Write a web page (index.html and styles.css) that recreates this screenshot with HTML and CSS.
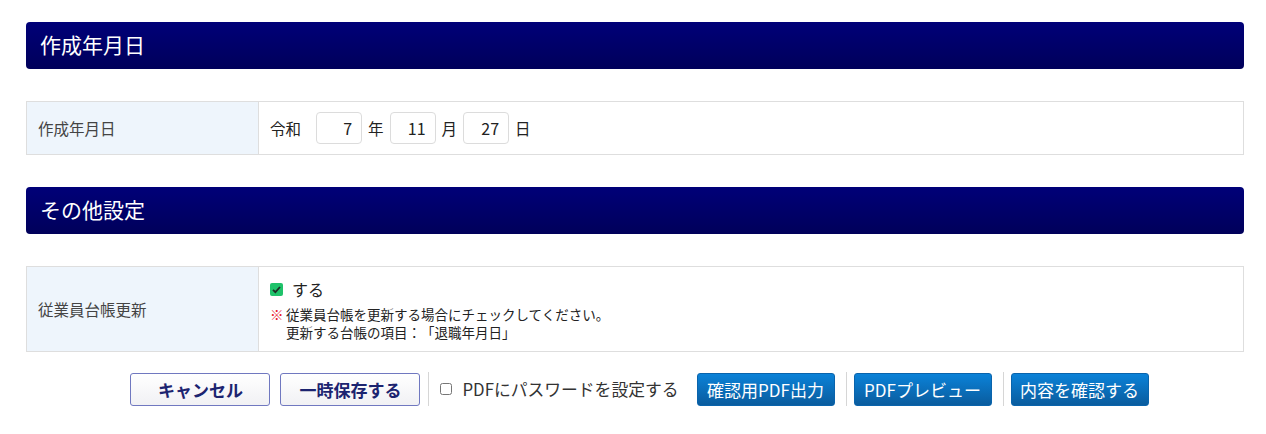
FILE: index.html
```html
<!DOCTYPE html>
<html>
  <head>
    <title>作成年月日</title>
    <link rel="stylesheet" href="styles.css">
  </head>
  <body>
    <div class="page">
      <h2 class="section_head">作成年月日</h2>
      <table class="form_table">
        <tr>
          <th>作成年月日</th>
          <td>
            <div class="date_row">
              <span class="era">令和</span>
              <input class="date_box" type="text" value="7"/>
              <span>年</span>
              <input class="date_box" type="text" value="11"/>
              <span>月</span>
              <input class="date_box" type="text" value="27"/>
              <span>日</span>
            </div>
          </td>
        </tr>
      </table>

      <h2 class="section_head">その他設定</h2>
      <table class="form_table tall">
        <tr>
          <th>従業員台帳更新</th>
          <td>
            <label class="check_line">
              <span class="green_check">
                <svg width="13" height="13" viewBox="0 0 13 13"><path d="M3 6.8 L5.4 9.2 L10 4" fill="none" stroke="#1d2b24" stroke-width="1.8"/></svg>
              </span>
              する
            </label>
            <p class="note"><span class="mark">※</span>従業員台帳を更新する場合にチェックしてください。<br/>更新する台帳の項目：「退職年月日」</p>
          </td>
        </tr>
      </table>

      <div class="actions">
        <button class="btn_plain">キャンセル</button>
        <button class="btn_plain">一時保存する</button>
        <span class="sep"></span>
        <label class="pw_check"><input type="checkbox"/>PDFにパスワードを設定する</label>
        <button class="btn_blue">確認用PDF出力</button>
        <span class="sep"></span>
        <button class="btn_blue">PDFプレビュー</button>
        <span class="sep"></span>
        <button class="btn_blue">内容を確認する</button>
      </div>
    </div>
  </body>
</html>
```

FILE: styles.css
```css
body
{
  margin: 0;
  background: #fff;
  color: #222;
  font-family: "Noto Sans CJK JP", "Noto Sans", sans-serif;
  text-spacing-trim: space-all;
}
.page
{
  padding: 22px 22px 0 26px;
}
.section_head
{
  margin: 0 0 32px 0;
  height: 47px;
  line-height: 45px;
  padding-left: 14px;
  border-radius: 4px;
  background: linear-gradient(#000078, #00005a);
  color: #fff;
  font-size: 21px;
  font-weight: normal;
}
.form_table
{
  width: 100%;
  border-collapse: collapse;
  margin-bottom: 32px;
}
.form_table th, .form_table td
{
  border: 1px solid #dedede;
  height: 52px;
  padding: 0 11px;
}
.form_table th
{
  width: 209px;
  background: #eef5fc;
  text-align: left;
  font-weight: normal;
  font-size: 15.5px;
  color: #444;
}
.form_table.tall th, .form_table.tall td
{
  height: 84px;
}
.date_row
{
  display: flex;
  align-items: center;
  gap: 6px;
  font-size: 15.5px;
}
.era
{
  margin-right: 9px;
}
.date_box
{
  width: 46px;
  height: 32px;
  box-sizing: border-box;
  border: 1px solid #dcdcdc;
  border-radius: 4px;
  text-align: right;
  padding: 0 9px;
  font-family: inherit;
  font-size: 16px;
  color: #222;
}
.check_line
{
  display: flex;
  align-items: center;
  gap: 9px;
  font-size: 16px;
}
.green_check
{
  width: 13px;
  height: 13px;
  border-radius: 2px;
  background: #1fc26a;
  display: inline-flex;
}
.note
{
  margin: 4px 0 0 0;
  font-size: 13.5px;
  line-height: 18px;
  padding-left: 16px;
  text-indent: -16px;
}
.mark
{
  color: #e8202a;
  font-weight: bold;
  display: inline-block;
  text-indent: 0;
  width: 16px;
}
.actions
{
  display: flex;
  justify-content: center;
  align-items: center;
  margin-top: -12px;
  padding-left: 9px;
}
.actions button
{
  height: 33px;
  border-radius: 3px;
  font-family: inherit;
  cursor: pointer;
  flex: none;
}
.btn_plain
{
  width: 140px;
  border: 1px solid #7078c0;
  background: linear-gradient(#fff, #f1f1f4);
  color: #1c2470;
  font-weight: bold;
  font-size: 17px;
}
.btn_plain + .btn_plain
{
  margin-left: 10px;
}
.btn_blue
{
  width: 138px;
  border: 1px solid #0a64ac;
  background: linear-gradient(#0b82d8, #0a5c9e);
  color: #fff;
  font-size: 17px;
}
.sep
{
  width: 1px;
  height: 34px;
  background: #d6d6d6;
  margin: 0 7px 0 11px;
}
.btn_plain + .sep
{
  margin: 0 11px 0 8px;
}
.pw_check
{
  display: flex;
  align-items: center;
  gap: 10px;
  font-size: 16.8px;
  color: #333;
  margin-right: 18px;
}
.pw_check input
{
  margin: 0;
  width: 12px;
  height: 12px;
}
```
